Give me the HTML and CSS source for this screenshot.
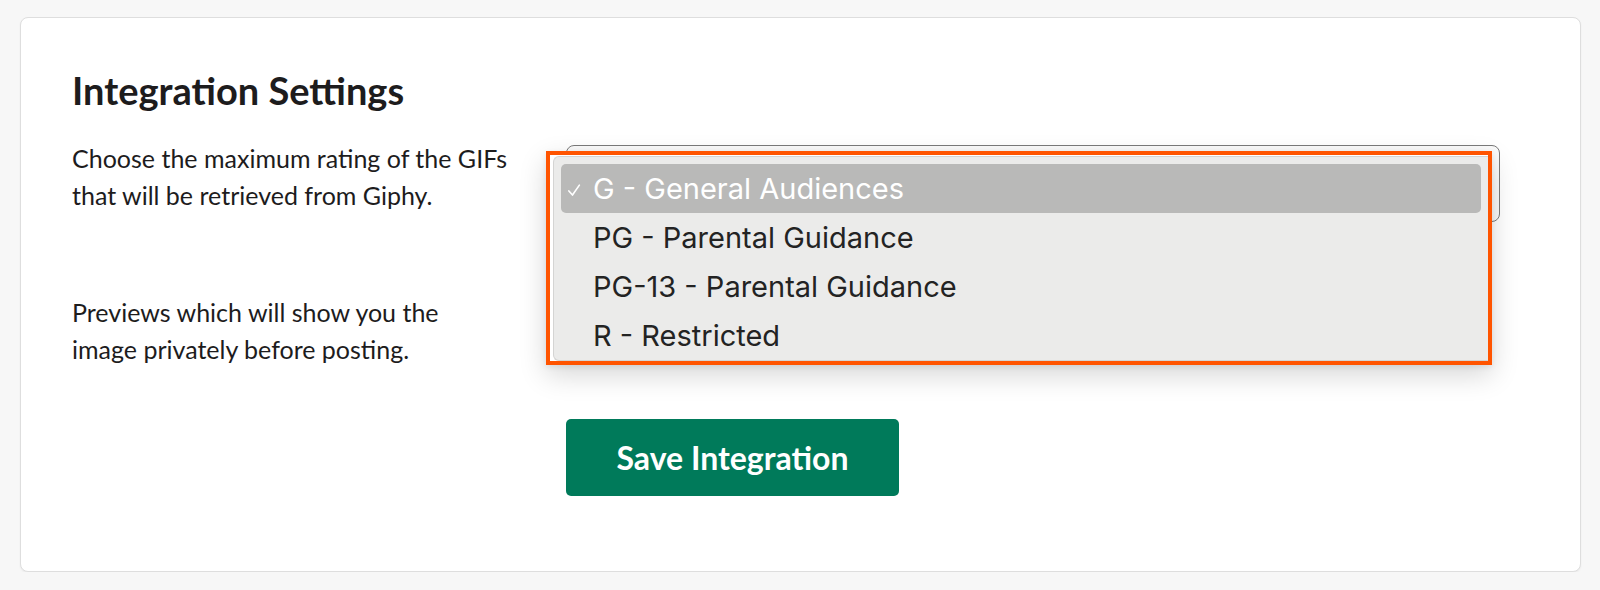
FILE: index.html
```html
<!DOCTYPE html>
<html lang="en">
<head>
<meta charset="utf-8">
<title>Integration Settings</title>
<link rel="stylesheet" href="styles.css">
</head>
<body>
<main class="card">
  <h2 class="title">Integration Settings</h2>
  <div class="form">
    <p class="label">Choose the maximum rating of the GIFs that will be retrieved from Giphy.</p>
    <div class="control select-wrap">
      <div class="select"></div>
      <div class="menu">
        <ul class="menu-panel">
          <li class="option selected"><svg class="check" viewBox="0 0 12 12" width="14" height="14"><path d="M1.6 6.8 L4.7 10.3 L10.6 1.8" fill="none" stroke="currentColor" stroke-width="1.4" stroke-linecap="round" stroke-linejoin="round"/></svg><span>G - General Audiences</span></li>
          <li class="option"><span>PG - Parental Guidance</span></li>
          <li class="option"><span>PG-13 - Parental Guidance</span></li>
          <li class="option"><span>R - Restricted</span></li>
        </ul>
      </div>
    </div>

    <p class="label second narrow">Previews which will show you the image privately before posting.</p>
    <div class="control second"></div>

    <div class="spacer"></div>
    <button class="save" type="button">Save Integration</button>
  </div>
</main>
</body>
</html>
```

FILE: styles.css
```css
html, body {
  margin: 0;
  padding: 0;
}

body {
  background: #f7f7f7;
  font-family: Lato, "Noto Sans", sans-serif;
  color: #1d1c1d;
  padding: 17px 19px 0 20px;
}

.card {
  box-sizing: border-box;
  width: 1561px;
  height: 555px;
  background: #ffffff;
  border: 1px solid #dedede;
  border-radius: 8px;
  box-shadow: 0 1px 2px rgba(0, 0, 0, 0.06);
  padding: 50px 40px 0 51px;
}

.title {
  margin: 0;
  font-size: 38px;
  line-height: 44px;
  font-weight: 700;
  color: #1d1c1d;
}

.form {
  display: grid;
  grid-template-columns: 494px 934px;
  align-items: start;
  margin-top: 28px;
}

.label {
  margin: 0;
  width: 470px;
  font-size: 25px;
  line-height: 37px;
  color: #1d1c1d;
}

.label.narrow {
  width: 400px;
}

.second {
  margin-top: 72px;
}

.select-wrap {
  position: relative;
  margin-top: 5px;
}

.select {
  box-sizing: border-box;
  height: 77px;
  border: 1px solid #7a7a7a;
  border-radius: 8px;
  background: #fafafa;
}

.menu {
  position: absolute;
  left: -20px;
  top: 6px;
  box-sizing: border-box;
  width: 946px;
  height: 214px;
  border: 4px solid #ff5400;
  background: #ffffff;
  box-shadow: 0 10px 26px rgba(0, 0, 0, 0.16), 0 2px 6px rgba(0, 0, 0, 0.08);
}

.menu-panel {
  list-style: none;
  margin: 1px 0 0 3px;
  box-sizing: border-box;
  height: 205px;
  padding: 7px 7px 0 7px;
  background: #ebebea;
  border: 1px solid #d4d4d3;
  border-right: none;
  border-radius: 6px 0 0 6px;
}

.option {
  display: flex;
  align-items: center;
  height: 49px;
  padding-left: 32px;
  border-radius: 5px;
  font-family: Inter, "Noto Sans", sans-serif;
  font-size: 29px;
  color: #232323;
  position: relative;
}

.option span {
  line-height: 49px;
}

.option.selected {
  background: #b9b9b8;
  color: #ffffff;
}

.check {
  position: absolute;
  left: 6px;
  top: 19px;
  color: #ffffff;
}

.spacer {
  height: 1px;
}

.save {
  margin-top: 51px;
  width: 333px;
  height: 77px;
  border: none;
  border-radius: 5px;
  background: #007a5a;
  color: #ffffff;
  font-family: Lato, "Noto Sans", sans-serif;
  font-size: 32px;
  font-weight: 700;
  cursor: pointer;
}
```
